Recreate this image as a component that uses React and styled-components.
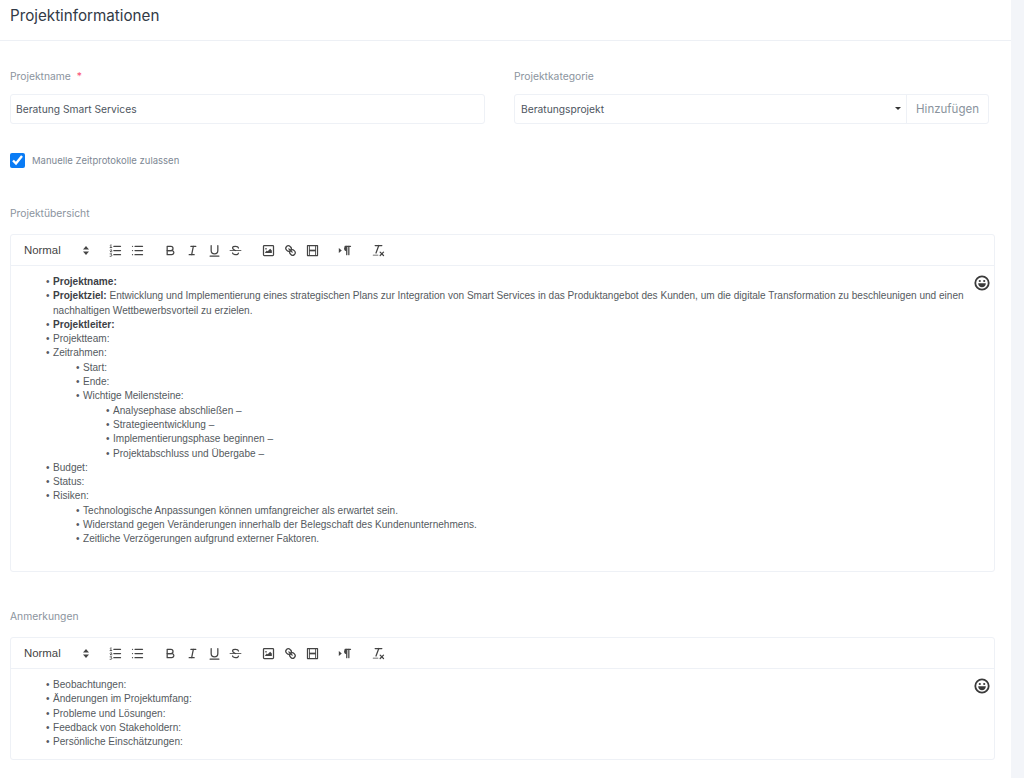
import React from 'react';
import styled, { createGlobalStyle } from 'styled-components';

const GlobalStyle = createGlobalStyle`
  html, body {
    margin: 0;
    padding: 0;
    background: #f3f5f9;
    font-family: 'Inter', 'Liberation Sans', sans-serif;
  }
`;

const Panel = styled.div`
  width: 1011px;
  min-height: 778px;
  background: #fff;
  box-sizing: border-box;
`;

const Header = styled.div`
  height: 41px;
  box-sizing: border-box;
  padding: 5px 10px 0;
  border-bottom: 1px solid #edf0f5;
`;

const Title = styled.h1`
  margin: 0;
  font-size: 15.2px;
  line-height: 21px;
  font-weight: 400;
  color: #323a46;
`;

const Body = styled.div`
  padding: 28px 16px 20px 10px;
`;

const FormRow = styled.div`
  display: grid;
  grid-template-columns: 475px 475px;
  column-gap: 29px;
`;

const Label = styled.label`
  display: block;
  font-size: 10.3px;
  line-height: 14px;
  color: #8b949e;
  margin-bottom: ${p => p.$gap}px;
`;

const Required = styled.span`
  color: #fa5c7c;
  margin-left: 3px;
`;

const TextInput = styled.input`
  display: block;
  width: 100%;
  height: 30px;
  box-sizing: border-box;
  padding: 0 5px;
  border: 1px solid #eef1f6;
  border-radius: 3px;
  font: 400 10.25px 'Inter', 'Liberation Sans', sans-serif;
  color: #4d5560;
  outline: none;
`;

const InputGroup = styled.div`
  display: flex;
  height: 30px;
  box-sizing: border-box;
  border: 1px solid #eef1f6;
  border-radius: 3px;
`;

const SelectBox = styled.div`
  position: relative;
  flex: 1;
  display: flex;
  align-items: center;
  padding-left: 6px;
  font-size: 10.25px;
  color: #4d5560;
`;

const Caret = styled.span`
  position: absolute;
  right: 5px;
  top: 12px;
  border-left: 3px solid transparent;
  border-right: 3px solid transparent;
  border-top: 3px solid #333;
`;

const AddButton = styled.div`
  width: 82px;
  box-sizing: border-box;
  border-left: 1px solid #eef1f6;
  display: flex;
  align-items: center;
  justify-content: center;
  font-size: 11.5px;
  color: #8a939d;
`;

const CheckRow = styled.label`
  display: flex;
  align-items: center;
  gap: 7px;
  margin-top: 28px;
  height: 16px;
  font-size: 9.5px;
  color: #7d8894;
`;

const CheckBox = styled.input`
  width: 15px;
  height: 15px;
  margin: 0;
  accent-color: #0a7cf5;
`;

const Section = styled.section`
  margin-top: ${p => p.$top}px;
`;

const Editor = styled.div`
  border: 1px solid #eef1f6;
  border-radius: 3px;
`;

const Toolbar = styled.div`
  height: 31px;
  box-sizing: border-box;
  display: flex;
  align-items: center;
  padding-left: 13px;
  border-bottom: 1px solid #eef1f6;
`;

const Picker = styled.div`
  width: 65px;
  margin-right: 15.5px;
  display: flex;
  align-items: center;
  justify-content: space-between;
  box-sizing: border-box;
  font: 400 11.4px 'Liberation Sans', sans-serif;
  color: #444;
`;

const ToolGroup = styled.div`
  display: flex;
  margin-right: 11px;
`;

const Tool = styled.span`
  width: 21.9px;
  height: 22px;
  display: flex;
  align-items: center;
  justify-content: center;
`;

const Icon = styled.svg.attrs({ viewBox: '0 0 18 18' })`
  width: 15px;
  height: 15px;
  fill: none;
  stroke: #444;
  stroke-width: 1.5;
  stroke-linecap: round;
  stroke-linejoin: round;
  .fill { fill: #444; stroke: none; }
  .thin { stroke-width: 1; }
`;

const Content = styled.div`
  position: relative;
  height: ${p => p.$height}px;
  box-sizing: border-box;
  padding: 9px 30px 0 35px;
  font: 400 10.07px/14.3px 'Liberation Sans', sans-serif;
  color: #555a60;
  strong {
    color: #3c4045;
  }
`;

const Smiley = styled.svg.attrs({ viewBox: '0 0 16 16' })`
  position: absolute;
  top: 9px;
  right: 4px;
  width: 16px;
  height: 16px;
`;

const List = styled.ul`
  list-style: none;
  margin: 0;
  padding: 0;
`;

const Item = styled.li`
  position: relative;
  padding-left: ${p => 7 + p.$level * 30}px;
  &::before {
    content: '•';
    position: absolute;
    left: ${p => p.$level * 30}px;
  }
`;

const overview = [
  [0, 'Projektname:', ''],
  [0, 'Projektziel:', ' Entwicklung und Implementierung eines strategischen Plans zur Integration von Smart Services in das Produktangebot des Kunden, um die digitale Transformation zu beschleunigen und einen nachhaltigen Wettbewerbsvorteil zu erzielen.'],
  [0, 'Projektleiter:', ''],
  [0, '', 'Projektteam:'],
  [0, '', 'Zeitrahmen:'],
  [1, '', 'Start:'],
  [1, '', 'Ende:'],
  [1, '', 'Wichtige Meilensteine:'],
  [2, '', 'Analysephase abschließen –'],
  [2, '', 'Strategieentwicklung –'],
  [2, '', 'Implementierungsphase beginnen –'],
  [2, '', 'Projektabschluss und Übergabe –'],
  [0, '', 'Budget:'],
  [0, '', 'Status:'],
  [0, '', 'Risiken:'],
  [1, '', 'Technologische Anpassungen können umfangreicher als erwartet sein.'],
  [1, '', 'Widerstand gegen Veränderungen innerhalb der Belegschaft des Kundenunternehmens.'],
  [1, '', 'Zeitliche Verzögerungen aufgrund externer Faktoren.'],
];

const notes = [
  [0, '', 'Beobachtungen:'],
  [0, '', 'Änderungen im Projektumfang:'],
  [0, '', 'Probleme und Lösungen:'],
  [0, '', 'Feedback von Stakeholdern:'],
  [0, '', 'Persönliche Einschätzungen:'],
];

const PickerArrows = () => (
  <svg width="6" height="9" viewBox="0 0 6 9">
    <path d="M3 0 L6 3.4 H0 Z M3 9 L0 5.6 H6 Z" fill="#444" />
  </svg>
);

const EditorToolbar = () => (
  <Toolbar>
    <Picker>Normal<PickerArrows /></Picker>
    <ToolGroup>
      <Tool><Icon>
        <line x1="7" x2="15" y1="4" y2="4" /><line x1="7" x2="15" y1="9" y2="9" /><line x1="7" x2="15" y1="14" y2="14" />
        <line className="thin" x1="2.5" x2="4.5" y1="5.5" y2="5.5" />
        <path className="thin" d="M3 2.5 L3.5 2 V5.5" />
        <path className="thin" d="M2.5 8.5 C3 7.5 5 7.8 4.5 9 L2.5 10.5 H4.7" />
        <path className="thin" d="M2.5 13 H4.5 L3.5 14 C5 14 5 16 3.5 16 H2.5" />
      </Icon></Tool>
      <Tool><Icon>
        <line x1="6" x2="15" y1="4" y2="4" /><line x1="6" x2="15" y1="9" y2="9" /><line x1="6" x2="15" y1="14" y2="14" />
        <line x1="3" x2="3" y1="4" y2="4" /><line x1="3" x2="3" y1="9" y2="9" /><line x1="3" x2="3" y1="14" y2="14" />
      </Icon></Tool>
    </ToolGroup>
    <ToolGroup>
      <Tool><Icon>
        <path d="M5,4H9.5A2.5,2.5,0,0,1,12,6.5v0A2.5,2.5,0,0,1,9.5,9H5V4Z" />
        <path d="M5,9h5.5A2.5,2.5,0,0,1,13,11.5v0A2.5,2.5,0,0,1,10.5,14H5V9Z" />
      </Icon></Tool>
      <Tool><Icon>
        <line x1="7" x2="13" y1="4" y2="4" /><line x1="5" x2="11" y1="14" y2="14" /><line x1="8" x2="10" y1="14" y2="4" />
      </Icon></Tool>
      <Tool><Icon>
        <path d="M5,3V9a4,4,0,0,0,4,4h0a4,4,0,0,0,4-4V3" />
        <rect className="fill" x="3" y="15" width="12" height="1.4" rx=".5" />
      </Icon></Tool>
      <Tool><Icon>
        <line className="thin" x1="15.5" x2="2.5" y1="9" y2="9" />
        <path d="M12.5 6 C12 3.5 5.5 3 5.5 6 C5.5 7.5 7 8 9 9" />
        <path d="M5.5 12 C6 14.5 12.5 15 12.5 12" />
      </Icon></Tool>
    </ToolGroup>
    <ToolGroup>
      <Tool><Icon>
        <rect x="3" y="3" width="12" height="12" rx="1" />
        <circle className="fill" cx="6" cy="7" r="1" />
        <polygon className="fill" points="5 12 5 11 7 9 8 10 11 7 13 9 13 12 5 12" />
      </Icon></Tool>
      <Tool><Icon>
        <line x1="7" x2="11" y1="7" y2="11" />
        <path d="M8.9,4.577a3.476,3.476,0,0,1,.36,4.679A3.476,3.476,0,0,1,4.577,8.9C3.185,7.5,2.035,6.4,4.217,4.217S7.5,3.185,8.9,4.577Z" />
        <path d="M13.423,9.1a3.476,3.476,0,0,0-4.679-.36,3.476,3.476,0,0,0,.36,4.679c1.392,1.392,2.5,2.542,4.679.36S14.815,10.5,13.423,9.1Z" />
      </Icon></Tool>
      <Tool><Icon>
        <rect x="3" y="3" width="12" height="12" />
        <rect className="fill" x="5" y="3" width="1" height="12" />
        <rect className="fill" x="12" y="3" width="1" height="12" />
        <rect className="fill" x="5" y="8" width="8" height="2" />
      </Icon></Tool>
    </ToolGroup>
    <ToolGroup>
      <Tool><Icon>
        <polygon className="fill" points="1 12 4.5 9 1 6" />
        <line x1="15" x2="8.5" y1="4" y2="4" />
        <path d="M13,4V14" />
        <path d="M10.5,4V14" />
        <path className="fill" d="M10.5,3.5a3.2,3.2,0,0,0,0,6.4Z" />
      </Icon></Tool>
    </ToolGroup>
    <ToolGroup>
      <Tool><Icon>
        <line x1="5" x2="13" y1="3" y2="3" />
        <line x1="6" x2="9.35" y1="12" y2="3" />
        <line x1="11" x2="15" y1="11" y2="15" />
        <line x1="15" x2="11" y1="11" y2="15" />
        <rect className="fill" x="2" y="14" width="7" height="1" rx=".5" />
      </Icon></Tool>
    </ToolGroup>
  </Toolbar>
);

const RichEditor = ({ items, height }) => (
  <Editor>
    <EditorToolbar />
    <Content $height={height}>
      <List>
        {items.map(([level, strong, text]) => (
          <Item key={strong + text} $level={level}>
            {strong && <strong>{strong}</strong>}{text}
          </Item>
        ))}
      </List>
      <Smiley>
        <circle cx="8" cy="8" r="6.7" fill="none" stroke="#3a3a3a" strokeWidth="1.8" />
        <circle cx="5.8" cy="6" r="1.1" fill="#3a3a3a" />
        <circle cx="10.2" cy="6" r="1.1" fill="#3a3a3a" />
        <path d="M4.2 8.3 H11.8 C11.8 11 10 12.3 8 12.3 C6 12.3 4.2 11 4.2 8.3 Z" fill="#3a3a3a" />
      </Smiley>
    </Content>
  </Editor>
);

export default function App() {
  return (
    <>
      <GlobalStyle />
      <Panel>
        <Header>
          <Title>Projektinformationen</Title>
        </Header>
        <Body>
          <FormRow>
            <div>
              <Label $gap={11}>Projektname <Required>*</Required></Label>
              <TextInput readOnly value="Beratung Smart Services" />
            </div>
            <div>
              <Label $gap={11}>Projektkategorie</Label>
              <InputGroup>
                <SelectBox>Beratungsprojekt<Caret /></SelectBox>
                <AddButton>Hinzufügen</AddButton>
              </InputGroup>
            </div>
          </FormRow>
          <CheckRow>
            <CheckBox type="checkbox" defaultChecked />
            Manuelle Zeitprotokolle zulassen
          </CheckRow>
          <Section $top={38}>
            <Label $gap={14}>Projektübersicht</Label>
            <RichEditor items={overview} height={305} />
          </Section>
          <Section $top={37}>
            <Label $gap={14}>Anmerkungen</Label>
            <RichEditor items={notes} height={90} />
          </Section>
        </Body>
      </Panel>
    </>
  );
}
